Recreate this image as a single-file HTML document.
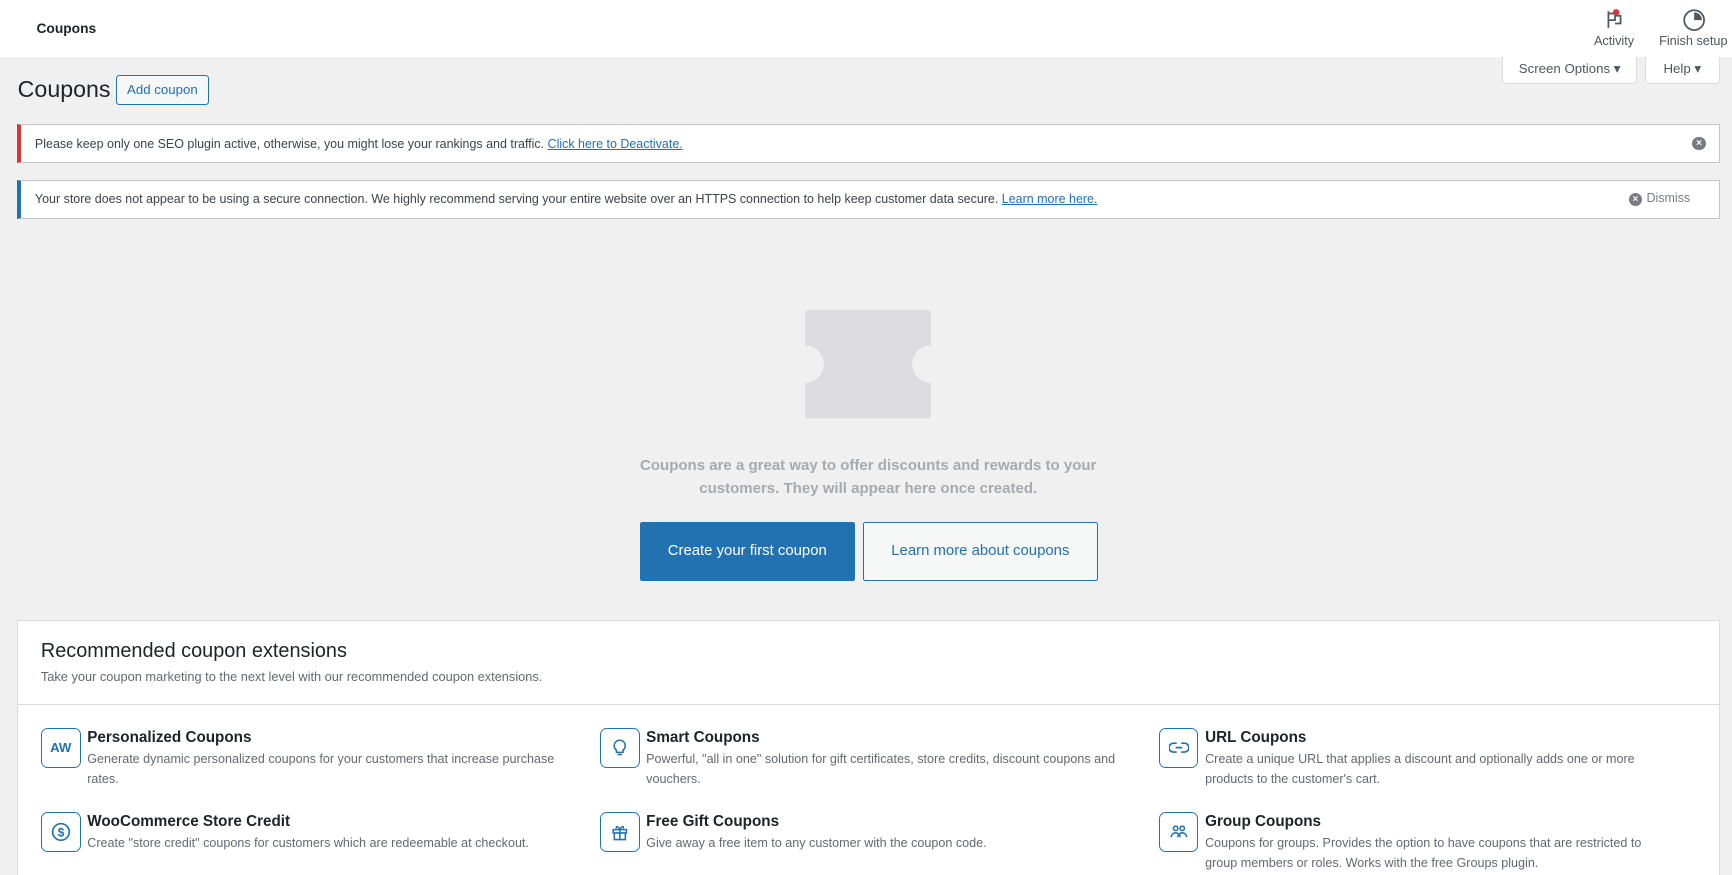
<!DOCTYPE html>
<html><head><meta charset="utf-8"><style>
*{box-sizing:border-box;margin:0;padding:0}
html,body{width:1732px;height:875px;overflow:hidden;background:#f0f0f1}
#w{zoom:1.1046;width:1568px;height:792px;position:relative;font-family:"Liberation Sans",sans-serif;color:#1d2327}
.a{position:absolute}
.hdr{left:0;top:0;width:1568px;height:52px;background:#fff}
.btn2{background:#fff;border:1px solid #dcdcde;border-top:none;border-radius:0 0 4px 4px;font-size:12px;color:#50575e;text-align:center;line-height:22px}
.notice{left:15px;width:1542px;background:#fff;border:1px solid #c3c4c7;font-size:11.3px;color:#3c434a;padding-left:13px}
.notice a{color:#2271b1}
.x{display:inline-block;width:12px;height:12px;border-radius:50%;background:#787c82;color:#fff;font-size:9px;line-height:12px;text-align:center;font-weight:bold}
.ico{flex:none;width:36px;height:36px;border:1px solid #2271b1;border-radius:6px;color:#2271b1;display:flex;align-items:center;justify-content:center;font-size:12px;font-weight:bold}
.it{display:flex;gap:6px}
.it h4{font-size:13.8px;font-weight:bold;color:#1d2327;margin-bottom:4px;margin-top:1px}
.it p{font-size:11.4px;color:#646970;line-height:18px}
</style></head><body><div id="w">
<div class="a hdr"></div>
<div class="a" style="left:33px;top:19px;font-size:12.5px;font-weight:bold">Coupons</div>
<svg class="a" style="left:1452px;top:7px" width="20" height="20" viewBox="0 0 20 20"><path d="M4 3v15M4 5h6v6H4M10 7h5v7h-5" fill="none" stroke="#50575e" stroke-width="1.6"/><circle cx="11" cy="4" r="3" fill="#d63638"/></svg>
<div class="a" style="left:1443px;top:31px;font-size:11.5px;color:#50575e">Activity</div>
<svg class="a" style="left:1523px;top:7px" width="22" height="22" viewBox="0 0 22 22"><circle cx="11" cy="11" r="9" fill="none" stroke="#50575e" stroke-width="1.6"/><path d="M11 11V4a7 7 0 0 1 7 7z" fill="#50575e"/></svg>
<div class="a" style="left:1502px;top:31px;font-size:11.5px;color:#50575e">Finish setup</div>
<div class="a btn2" style="left:1360px;top:52px;width:122px;height:24px">Screen Options ▾</div>
<div class="a btn2" style="left:1489px;top:52px;width:68px;height:24px">Help ▾</div>
<div class="a" style="left:16px;top:69px;font-size:21px">Coupons</div>
<div class="a" style="left:105px;top:68px;width:84px;height:27px;border:1px solid #2271b1;border-radius:3px;font-size:12px;color:#2271b1;text-align:center;line-height:25px;background:#f6f7f7">Add coupon</div>
<div class="a notice" style="top:112px;height:36px;line-height:35px;border-left:4px solid #d63638">Please keep only one SEO plugin active, otherwise, you might lose your rankings and traffic. <a style="text-decoration:underline">Click here to Deactivate.</a><span class="a x" style="right:12px;top:11px">×</span></div>
<div class="a notice" style="top:163px;height:35px;line-height:34px;border-left:4px solid #2271b1">Your store does not appear to be using a secure connection. We highly recommend serving your entire website over an HTTPS connection to help keep customer data secure. <a style="text-decoration:underline">Learn more here.</a><span class="a" style="right:26px;top:0;color:#787c82;display:flex;align-items:center;gap:4px;height:33px"><span class="x">×</span>Dismiss</span></div>
<svg class="a" style="left:729px;top:281px" width="114" height="98" viewBox="0 0 114 98"><rect width="114" height="98" rx="3" fill="#dcdcde"/><circle cx="0" cy="49" r="17" fill="#f0f0f1"/><circle cx="114" cy="49" r="17" fill="#f0f0f1"/></svg>
<div class="a" style="left:536px;top:411px;width:500px;text-align:center;font-size:13.6px;line-height:21px;color:#a7aaad;font-weight:bold">Coupons are a great way to offer discounts and rewards to your<br>customers. They will appear here once created.</div>
<div class="a" style="left:579px;top:473px;width:195px;height:53px;background:#2271b1;border-radius:2px;color:#fff;font-size:13.5px;text-align:center;line-height:53px">Create your first coupon</div>
<div class="a" style="left:781px;top:473px;width:213px;height:53px;border:1px solid #2271b1;border-radius:2px;color:#2271b1;font-size:13.5px;text-align:center;line-height:51px;background:#f6f7f7">Learn more about coupons</div>
<div class="a" style="left:15px;top:561px;width:1542px;height:240px;background:#fff;border:1px solid #dcdcde"></div>
<div class="a" style="left:37px;top:579px;font-size:18px">Recommended coupon extensions</div>
<div class="a" style="left:37px;top:606px;font-size:11.6px;color:#646970">Take your coupon marketing to the next level with our recommended coupon extensions.</div>
<div class="a" style="left:16px;top:637px;width:1540px;height:1px;background:#dcdcde"></div>

<div class="a it" style="left:37px;top:659px;width:480px"><div class="ico">AW</div><div><h4>Personalized Coupons</h4><p>Generate dynamic personalized coupons for your customers that increase purchase rates.</p></div></div>
<div class="a it" style="left:543px;top:659px;width:490px"><div class="ico"><svg width="14" height="18" viewBox="0 0 14 18"><path d="M4 11a5 5 0 1 1 6 0v2H4zM5 15h4" fill="none" stroke="#2271b1" stroke-width="1.4"/></svg></div><div><h4>Smart Coupons</h4><p>Powerful, "all in one" solution for gift certificates, store credits, discount coupons and vouchers.</p></div></div>
<div class="a it" style="left:1049px;top:659px;width:460px"><div class="ico"><svg width="18" height="12" viewBox="0 0 18 12"><path d="M7 2H4a4 4 0 0 0 0 8h3M11 2h3a4 4 0 0 1 0 8h-3M6 6h6" fill="none" stroke="#2271b1" stroke-width="1.5"/></svg></div><div><h4>URL Coupons</h4><p>Create a unique URL that applies a discount and optionally adds one or more products to the customer's cart.</p></div></div>
<div class="a it" style="left:37px;top:735px;width:490px"><div class="ico"><svg width="18" height="18" viewBox="0 0 18 18"><circle cx="9" cy="9" r="7.5" fill="none" stroke="#2271b1" stroke-width="1.5"/><text x="9" y="13" font-size="11" text-anchor="middle" fill="#2271b1" font-family="Liberation Sans" font-weight="bold">$</text></svg></div><div><h4>WooCommerce Store Credit</h4><p>Create "store credit" coupons for customers which are redeemable at checkout.</p></div></div>
<div class="a it" style="left:543px;top:735px;width:490px"><div class="ico"><svg width="16" height="16" viewBox="0 0 16 16"><path d="M2 6h12v3H2zM3 9v6h10V9M8 6v9M8 6C6 2 4 3 5 5M8 6c2-4 4-3 3-1" fill="none" stroke="#2271b1" stroke-width="1.4"/></svg></div><div><h4>Free Gift Coupons</h4><p>Give away a free item to any customer with the coupon code.</p></div></div>
<div class="a it" style="left:1049px;top:735px;width:460px"><div class="ico"><svg width="18" height="14" viewBox="0 0 18 14"><circle cx="6" cy="4" r="2" fill="none" stroke="#2271b1" stroke-width="1.4"/><circle cx="12" cy="4" r="2" fill="none" stroke="#2271b1" stroke-width="1.4"/><path d="M2 12a4 4 0 0 1 8 0M8 12a4 4 0 0 1 8 0" fill="none" stroke="#2271b1" stroke-width="1.4"/></svg></div><div><h4>Group Coupons</h4><p>Coupons for groups. Provides the option to have coupons that are restricted to group members or roles. Works with the free Groups plugin.</p></div></div>
</div></body></html>
